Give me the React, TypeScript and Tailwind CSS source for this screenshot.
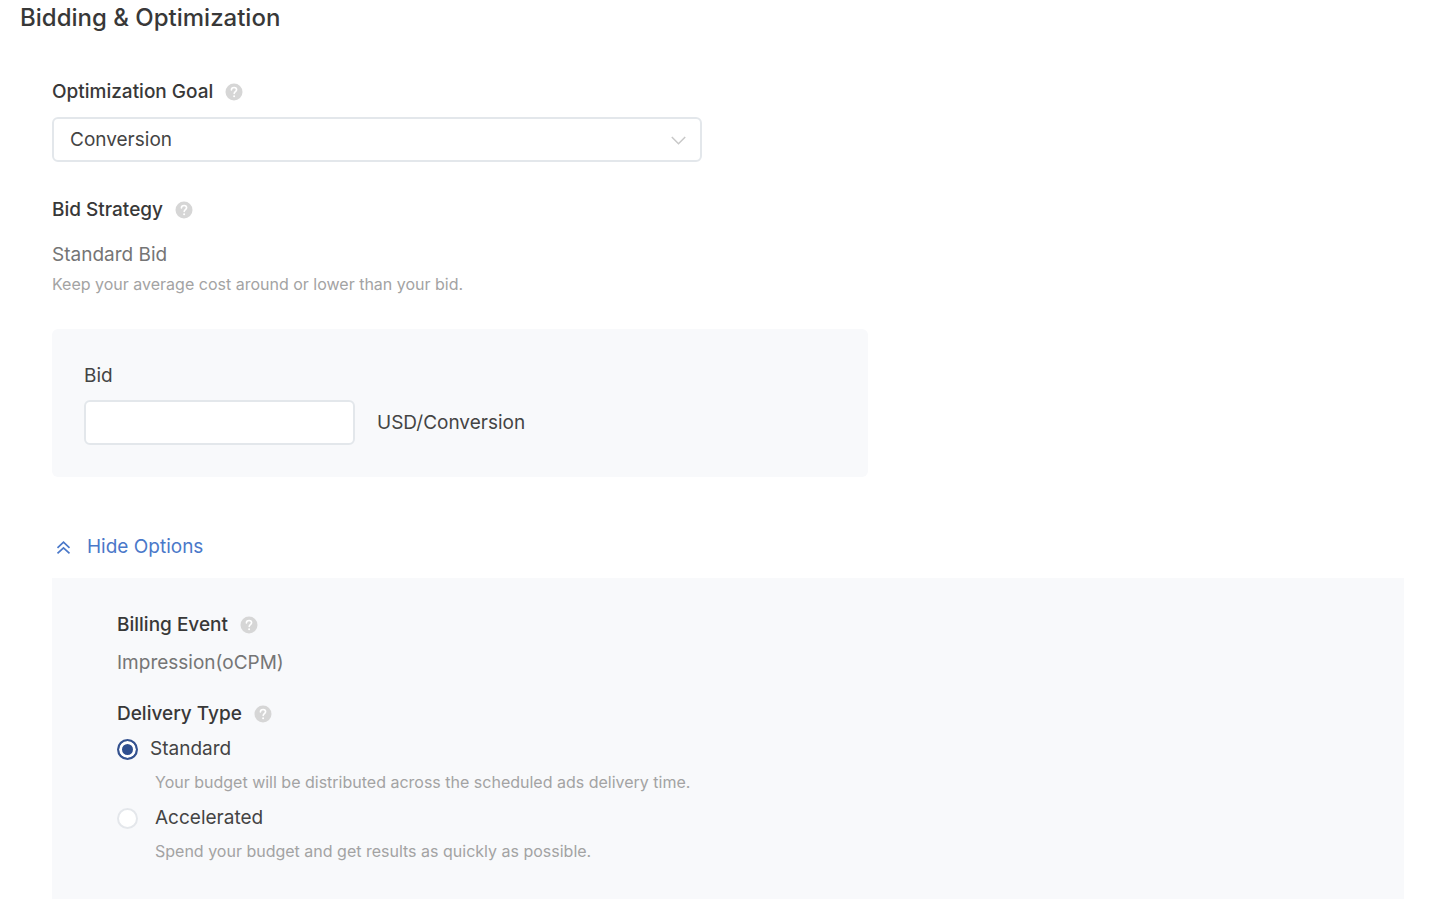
import React, { useState } from 'react';

const HelpIcon: React.FC = () => (
  <svg width="18" height="18" viewBox="0 0 18 18" fill="none" aria-hidden="true">
    <circle cx="9" cy="9" r="8.5" fill="#d6d6d6" />
    <path
      d="M6.4 7c0-1.5 1.1-2.5 2.7-2.5s2.5 1 2.5 2.3c0 1.8-2.4 1.9-2.4 3.7"
      stroke="#fff"
      strokeWidth="1.6"
      strokeLinecap="round"
    />
    <circle cx="9.1" cy="13.2" r="1" fill="#fff" />
  </svg>
);

interface FieldLabelProps {
  children: React.ReactNode;
  htmlFor?: string;
  className?: string;
}

const FieldLabel: React.FC<FieldLabelProps> = ({ children, htmlFor, className = '' }) => {
  const Tag = htmlFor ? 'label' : 'h2';
  return (
    <div className={`flex items-center gap-3 ${className}`}>
      <Tag htmlFor={htmlFor} className="text-[19px] leading-7 font-medium text-[#383838]">
        {children}
      </Tag>
      <button type="button" aria-label="Help">
        <HelpIcon />
      </button>
    </div>
  );
};

const radioClass =
  'appearance-none shrink-0 size-[21px] rounded-full border-2 border-[#e4e7eb] bg-white checked:border-[#34528f] checked:bg-[#2f4f8f] checked:shadow-[inset_0_0_0_3px_#fff]';

const App: React.FC = () => {
  const [goal, setGoal] = useState('conversion');
  const [bid, setBid] = useState('');
  const [open, setOpen] = useState(true);
  const [delivery, setDelivery] = useState('standard');

  return (
    <main className="bg-white pb-4 font-[Inter,sans-serif] text-[19px] leading-7 text-[#444]">
      <h1 className="pl-5 text-2xl leading-9 font-medium text-[#383838]">Bidding &amp; Optimization</h1>

      <div className="pl-[52px] pr-[26px] pt-[42px]">

        {/* Optimization goal */}
        <FieldLabel htmlFor="goal">Optimization Goal</FieldLabel>
        <div className="relative mt-[11px] max-w-[650px]">
          <select
            id="goal"
            value={goal}
            onChange={(e) => setGoal(e.target.value)}
            className="block w-full h-[45px] appearance-none rounded-md border-2 border-[#e3e7eb] bg-white px-4 text-[#444]"
          >
            <option value="conversion">Conversion</option>
            <option value="click">Click</option>
          </select>
          <svg
            className="pointer-events-none absolute right-4 top-[19px]"
            width="15"
            height="9"
            viewBox="0 0 15 9"
            fill="none"
            stroke="#c8c8c8"
            strokeWidth="1.5"
          >
            <path d="M.8 1l6.7 6.7L14.2 1" />
          </svg>
        </div>

        {/* Bid strategy */}
        <FieldLabel className="mt-[34px]">Bid Strategy</FieldLabel>
        <p className="mt-[17px] text-[#757575]">Standard Bid</p>
        <p className="mt-[3px] text-base leading-6 text-[#a3a3a3]">
          Keep your average cost around or lower than your bid.
        </p>

        <section className="mt-[33px] max-w-[816px] rounded-md bg-[#f8f9fb] px-8 pt-[33px] pb-8">
          <label htmlFor="bid" className="block">Bid</label>
          <div className="mt-[10px] flex items-center gap-[22px]">
            <input
              id="bid"
              type="text"
              value={bid}
              onChange={(e) => setBid(e.target.value)}
              className="w-[271px] h-[45px] rounded-md border-2 border-[#e3e7eb] bg-white px-4"
            />
            <span>USD/Conversion</span>
          </div>
        </section>

        <button
          type="button"
          aria-expanded={open}
          onClick={() => setOpen(!open)}
          className="mt-14 flex items-center gap-4 pl-1 text-[#4a78c9]"
        >
          <svg width="15" height="15" viewBox="0 0 15 15" fill="none" stroke="currentColor" strokeWidth="1.7">
            <path d="M1.5 7.8l6-5.6 6 5.6M1.5 13.4l6-5.6 6 5.6" />
          </svg>
          Hide Options
        </button>

        {/* Advanced options */}
        {open && (
          <section className="mt-[17px] bg-[#f8f9fb] px-[65px] pt-[33px] pb-9">
            <FieldLabel>Billing Event</FieldLabel>
            <p className="mt-[10px] text-[#757575]">Impression(oCPM)</p>

            <FieldLabel className="mt-[23px]">Delivery Type</FieldLabel>
            <label className="mt-[7px] flex w-fit items-center gap-3">
              <input
                type="radio"
                name="delivery"
                value="standard"
                checked={delivery === 'standard'}
                onChange={() => setDelivery('standard')}
                className={radioClass}
              />
              Standard
            </label>
            <p className="mt-[7px] pl-[38px] text-base leading-6 text-[#a3a3a3]">
              Your budget will be distributed across the scheduled ads delivery time.
            </p>
            <label className="mt-[10px] flex w-fit items-center gap-[17px]">
              <input
                type="radio"
                name="delivery"
                value="accelerated"
                checked={delivery === 'accelerated'}
                onChange={() => setDelivery('accelerated')}
                className={radioClass}
              />
              Accelerated
            </label>
            <p className="mt-[7px] pl-[38px] text-base leading-6 text-[#a3a3a3]">
              Spend your budget and get results as quickly as possible.
            </p>
          </section>
        )}
      </div>
    </main>
  );
};

export default App;
